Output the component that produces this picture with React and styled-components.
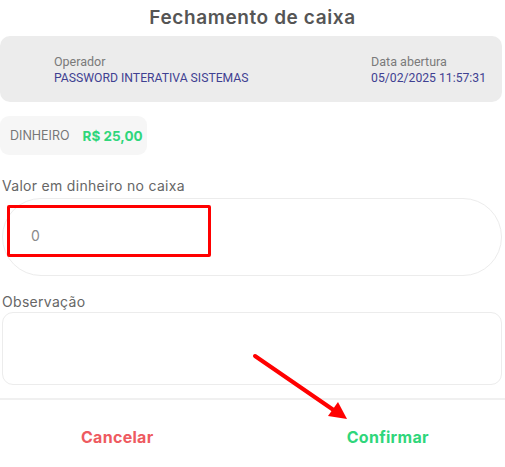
import React from "react";
import styled, { createGlobalStyle } from "styled-components";

const GlobalStyle = createGlobalStyle`
    body {
        margin: 0;
        background: #ffffff;
        font-family: Inter, "Noto Sans", sans-serif;
    }
`;

const Page = styled.div`
    position: relative;
    width: 505px;
    height: 467px;
    overflow: hidden;
    background: #ffffff;
    display: flex;
    flex-direction: column;

    & > * {
        flex-shrink: 0;
    }
`;

const Title = styled.div`
    height: 36px;
    line-height: 36px;
    text-align: center;
    font-size: 19px;
    letter-spacing: 0.6px;
    font-weight: 600;
    color: #555555;
`;

const InfoCard = styled.div`
    margin-right: 3px;
    display: flex;
    justify-content: space-between;
    padding: 18px 16px 16px 54px;
    background: #ececec;
    border-radius: 10px;
    font-family: Roboto, "Liberation Sans", sans-serif;
    font-size: 12.5px;
`;

const InfoColumn = styled.div`
    display: flex;
    flex-direction: column;
`;

const InfoLabel = styled.span`
    line-height: 16px;
    color: #7a7a7a;
`;

const InfoValue = styled.span`
    line-height: 16px;
    font-size: 12.2px;
    color: #3f4192;
`;

const Chip = styled.div`
    align-self: flex-start;
    margin-top: 14px;
    height: 39px;
    width: 137px;
    padding-left: 10px;
    display: flex;
    align-items: center;
    gap: 13px;
    background: #f6f6f6;
    border-radius: 9px;
    font-size: 12.5px;
`;

const ChipLabel = styled.span`
    color: #777777;
`;

const ChipValue = styled.span`
    color: #2fd67b;
    font-weight: 700;
    font-size: 13.5px;
`;

const FieldLabel = styled.div`
    margin: ${(p) => p.$top}px 0 0 2px;
    line-height: 20px;
    font-size: 14px;
    letter-spacing: 0.3px;
    color: #666666;
`;

const MoneyInput = styled.div`
    margin: 2px 3px 0 2px;
    height: 72px;
    padding: 0 0 4px 28px;
    border: 1px solid #ececec;
    border-radius: 39px;
    display: flex;
    align-items: center;
    font-size: 14px;
    color: #8a8a8a;
`;

const NoteBox = styled.div`
    margin: 0 3px 0 2px;
    height: 71px;
    border: 1px solid #ececec;
    border-radius: 11px;
`;

const Divider = styled.div`
    margin-top: 13px;
    height: 2px;
    background: #f0f0f0;
`;

const Footer = styled.div`
    display: grid;
    grid-template-columns: 1fr 1fr;
    height: 60px;
    padding-top: 7px;
`;

const ActionButton = styled.button`
    border: none;
    background: none;
    font-family: Inter, "Noto Sans", sans-serif;
    font-size: 16px;
    letter-spacing: 0.3px;
    font-weight: 700;
    color: ${(p) => p.$color};
    padding: ${(p) => (p.$left ? "0 18px 0 0" : "0 0 0 18px")};
`;

const Highlight = styled.div`
    position: absolute;
    left: 7px;
    top: 205px;
    width: 198px;
    height: 46px;
    border: 3px solid #ff0000;
    border-radius: 2px;
    pointer-events: none;
`;

const ArrowLayer = styled.svg`
    position: absolute;
    left: 0;
    top: 0;
    pointer-events: none;
`;

const App = () => {
    return (
        <Page>
            <GlobalStyle />
            <Title>Fechamento de caixa</Title>
            <InfoCard>
                <InfoColumn>
                    <InfoLabel>Operador</InfoLabel>
                    <InfoValue>PASSWORD INTERATIVA SISTEMAS</InfoValue>
                </InfoColumn>
                <InfoColumn>
                    <InfoLabel>Data abertura</InfoLabel>
                    <InfoValue>05/02/2025 11:57:31</InfoValue>
                </InfoColumn>
            </InfoCard>
            <Chip>
                <ChipLabel>DINHEIRO</ChipLabel>
                <ChipValue>R$ 25,00</ChipValue>
            </Chip>
            <FieldLabel $top={21}>Valor em dinheiro no caixa</FieldLabel>
            <MoneyInput>0</MoneyInput>
            <FieldLabel $top={16}>Observação</FieldLabel>
            <NoteBox />
            <Divider />
            <Footer>
                <ActionButton $left $color="#ee5a5f">Cancelar</ActionButton>
                <ActionButton $color="#2fd67b">Confirmar</ActionButton>
            </Footer>
            <Highlight />
            <ArrowLayer width="505" height="467" viewBox="0 0 505 467">
                <line x1="255" y1="356" x2="335" y2="411" stroke="#ff0000" strokeWidth="4" strokeLinecap="round" />
                <polygon points="347,419 328,416 338,402" fill="#ff0000" />
            </ArrowLayer>
        </Page>
    );
};

export default App;
